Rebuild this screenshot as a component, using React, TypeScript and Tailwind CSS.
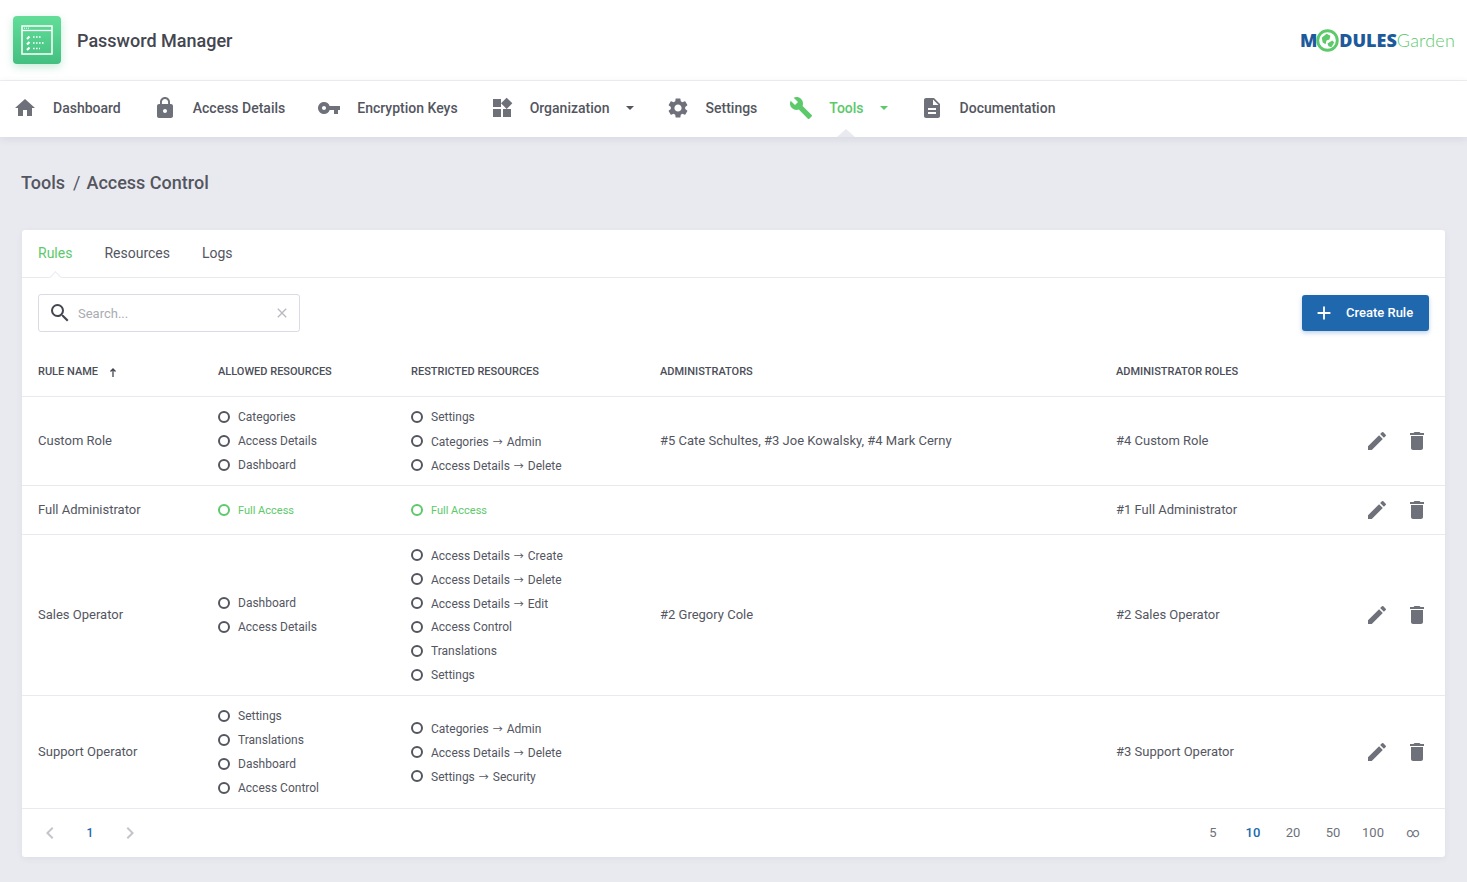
import { MdAdd, MdBuild, MdChevronLeft, MdChevronRight, MdClose, MdDelete, MdDescription, MdEdit, MdHome, MdLock, MdSearch, MdSettings, MdVpnKey, MdWidgets } from "react-icons/md"
import type { IconType } from "react-icons"

type NavItem = { label: string; icon: IconType; caret?: boolean; active?: boolean }

const navItems: NavItem[] = [
  { label: "Dashboard", icon: MdHome },
  { label: "Access Details", icon: MdLock },
  { label: "Encryption Keys", icon: MdVpnKey },
  { label: "Organization", icon: MdWidgets, caret: true },
  { label: "Settings", icon: MdSettings },
  { label: "Tools", icon: MdBuild, caret: true, active: true },
  { label: "Documentation", icon: MdDescription },
]

type Res = { text: string; sub?: string; green?: boolean }
type Rule = { name: string; allowed: Res[]; restricted: Res[]; admins: string; roles: string }

const rules: Rule[] = [
  {
    name: "Custom Role",
    allowed: [{ text: "Categories" }, { text: "Access Details" }, { text: "Dashboard" }],
    restricted: [{ text: "Settings" }, { text: "Categories", sub: "Admin" }, { text: "Access Details", sub: "Delete" }],
    admins: "#5 Cate Schultes, #3 Joe Kowalsky, #4 Mark Cerny",
    roles: "#4 Custom Role",
  },
  {
    name: "Full Administrator",
    allowed: [{ text: "Full Access", green: true }],
    restricted: [{ text: "Full Access", green: true }],
    admins: "",
    roles: "#1 Full Administrator",
  },
  {
    name: "Sales Operator",
    allowed: [{ text: "Dashboard" }, { text: "Access Details" }],
    restricted: [
      { text: "Access Details", sub: "Create" },
      { text: "Access Details", sub: "Delete" },
      { text: "Access Details", sub: "Edit" },
      { text: "Access Control" },
      { text: "Translations" },
      { text: "Settings" },
    ],
    admins: "#2 Gregory Cole",
    roles: "#2 Sales Operator",
  },
  {
    name: "Support Operator",
    allowed: [{ text: "Settings" }, { text: "Translations" }, { text: "Dashboard" }, { text: "Access Control" }],
    restricted: [{ text: "Categories", sub: "Admin" }, { text: "Access Details", sub: "Delete" }, { text: "Settings", sub: "Security" }],
    admins: "",
    roles: "#3 Support Operator",
  },
]

const gridCols = "grid grid-cols-[180px_193px_249px_456px_1fr]"

function ResourceList({ items }: { items: Res[] }) {
  return (
    <div className="flex flex-col justify-center">
      {items.map((item, i) => (
        <div key={i} className={`flex items-center h-[24px] ${item.green ? "text-[11px] text-[#5cc96b]" : "text-[12px] text-[#54565f]"}`}>
          <span className={`w-[12px] h-[12px] rounded-full border-2 mr-[8px] ${item.green ? "border-[#5cc96b]" : "border-[#54565f]"}`} />
          <span className={item.green ? "pt-[2px]" : item.sub ? "pt-[1px]" : ""}>
            {item.text}
            {item.sub && (
              <>
                {" "}
                <span className="font-['Noto_Sans_CJK_JP',sans-serif] text-[10px] mx-[1px] leading-none">→</span> {item.sub}
              </>
            )}
          </span>
        </div>
      ))}
    </div>
  )
}

function AppLogo() {
  return (
    <div className="w-[48px] h-[48px] rounded-[4px] bg-gradient-to-b from-[#62de99] to-[#43bf80] shadow-[0_3px_8px_rgba(70,190,130,0.3)] flex items-center justify-center">
      <svg width="32" height="30" viewBox="0 0 32 30" fill="none" stroke="#fff">
        <rect x="1" y="1" width="30" height="28" strokeWidth="1.5" />
        <path d="M1 5.5h30" strokeWidth="1.3" />
        <path d="M3 3.2h5" strokeWidth="1" strokeDasharray="1 1" />
        <path d="M6 14l2.5-2.5M6 19.5l2.5-2.5M6 25l2.5-2.5" strokeWidth="2.2" />
        <path d="M12 12h9M12 18h12M12 23.5h7" strokeWidth="1.6" strokeDasharray="1.6 1.4" />
      </svg>
    </div>
  )
}

function BrandLogo() {
  return (
    <div className="flex items-center font-['Open_Sans',sans-serif] leading-none select-none">
      <span className="text-[#1d5a9c] text-[18px] font-extrabold -mr-[1px]">M</span>
      <svg width="23" height="23" viewBox="0 0 24 24">
        <circle cx="12" cy="12" r="10.2" fill="#fff" stroke="#5cc96b" strokeWidth="3" />
        <path d="M6 9l5-4 4 2-1 4-3 1-1 4-3-2zM12 15l5-3 2 2-3 5-3-1z" fill="#5cc96b" />
      </svg>
      <span className="text-[#1d5a9c] text-[18px] font-extrabold">DULES</span>
      <span className="text-[#5cc96b] text-[18px] font-['Lato',sans-serif] font-light tracking-[0.2px]">Garden</span>
    </div>
  )
}

export default function App() {
  return (
    <div className="min-h-screen bg-[#e9eaf0] font-['Roboto',sans-serif] text-[#54565f]">
      {/* Header */}
      <header className="h-[81px] bg-white border-b border-[#f0f0f3] flex items-center justify-between pl-[13px] pr-[12px]">
        <div className="flex items-center gap-[16px]">
          <AppLogo />
          <h1 className="text-[18px] font-medium text-[#44464f]">Password Manager</h1>
        </div>
        <BrandLogo />
      </header>

      {/* Nav */}
      <nav className="relative h-[56px] bg-white shadow-[0_2px_8px_rgba(60,65,90,0.1)] flex items-center pl-[14px] pb-[2px] gap-[33px]">
        {navItems.map((item) => {
          const Icon = item.icon
          return (
            <div key={item.label} className={`flex items-center gap-[16px] text-[14px] font-medium ${item.active ? "text-[#5cc96b]" : "text-[#54565f]"}`}>
              <Icon size={24} className={`-ml-[1px] ${item.active ? "text-[#5cc96b]" : "text-[#6f717a]"}`} />
              <span>{item.label}</span>
              {item.caret && <span className="w-0 h-0 border-x-[4.5px] border-x-transparent border-t-[4.5px] border-t-current" />}
            </div>
          )
        })}
        <span className="absolute left-[837px] bottom-0 w-0 h-0 border-x-[9px] border-x-transparent border-b-[8px] border-b-[#e9eaf0]" />
      </nav>

      <main className="px-[22px] pb-[25px]">
        <div className="h-[93px] flex items-center -ml-[1px] pb-[2px] text-[18px] font-medium text-[#54565f] gap-[8px]">
          <span>Tools</span>
          <span className="font-normal -mr-[2px]">/</span>
          <span>Access Control</span>
        </div>

        <section className="bg-white rounded-[3px] shadow-[0_2px_6px_rgba(60,65,90,0.06)]">
          {/* Tabs */}
          <div className="relative h-[48px] border-b border-[#e9eaf0] flex items-center px-[16px] gap-[32px] text-[14px] pb-[1px]">
            <span className="text-[#5cc96b]">Rules</span>
            <span>Resources</span>
            <span>Logs</span>
            <span className="absolute left-[29px] bottom-[-5px] w-[9px] h-[9px] rotate-45 bg-white border-l border-t border-[#e9eaf0]" />
          </div>

          {/* Toolbar */}
          <div className="flex items-center justify-between px-[16px] pt-[16px]">
            <div className="w-[262px] h-[38px] border border-[#d9dbe5] rounded-[3px] flex items-center pl-[9px] pr-[9px] gap-[6px]">
              <MdSearch size={24} className="text-[#44464f]" />
              <span className="flex-1 text-[13px] text-[#a9abb2] pt-[1px]">Search...</span>
              <MdClose size={16} className="text-[#b8bac0]" />
            </div>
            <button className="w-[127px] h-[36px] bg-[#2068ae] rounded-[3px] shadow-[0_2px_4px_rgba(32,104,174,0.3)] text-white text-[13px] font-medium flex items-center pl-[11px] gap-[11px]">
              <MdAdd size={22} />
              Create Rule
            </button>
          </div>

          {/* Table head */}
          <div className={`${gridCols} h-[65px] pt-[16px] items-center px-[16px] border-b border-[#e9eaf0] text-[11px] font-medium text-[#4b4d57] uppercase`}>
            <div className="flex items-center gap-[9px]">
              Rule Name
              <svg width="8" height="9" viewBox="0 0 8 9" fill="none" stroke="#44464f" strokeWidth="1.3" className="ml-[2px]">
                <path d="M4 9V1M1.5 3.5L4 1l2.5 2.5" />
              </svg>
            </div>
            <div>Allowed Resources</div>
            <div>Restricted Resources</div>
            <div>Administrators</div>
            <div>Administrator Roles</div>
          </div>

          {/* Rows */}
          {rules.map((rule) => (
            <div key={rule.name} className={`${gridCols} min-h-[49px] items-center px-[16px] py-[8px] border-b border-[#e9eaf0] text-[13px]`}>
              <div>{rule.name}</div>
              <ResourceList items={rule.allowed} />
              <ResourceList items={rule.restricted} />
              <div>{rule.admins}</div>
              <div className="flex items-center justify-between">
                <span>{rule.roles}</span>
                <div className="flex items-center gap-[16px] text-[#6f717a]">
                  <MdEdit size={24} />
                  <MdDelete size={24} />
                </div>
              </div>
            </div>
          ))}

          {/* Footer */}
          <div className="h-[48px] flex items-center justify-between pl-[16px] pr-[12px] text-[13px]">
            <div className="flex items-center text-[#c4c5cb]">
              <MdChevronLeft size={24} />
              <span className="w-[56px] text-center text-[#2068ae] font-medium text-[12px]">1</span>
              <MdChevronRight size={24} />
            </div>
            <div className="flex items-center text-[#6f717a]">
              {["5", "10", "20", "50", "100", "∞"].map((n) => (
                <span key={n} className={`w-[40px] text-center ${n === "10" ? "text-[#2068ae] font-medium" : ""}`}>{n}</span>
              ))}
            </div>
          </div>
        </section>
      </main>
    </div>
  )
}
